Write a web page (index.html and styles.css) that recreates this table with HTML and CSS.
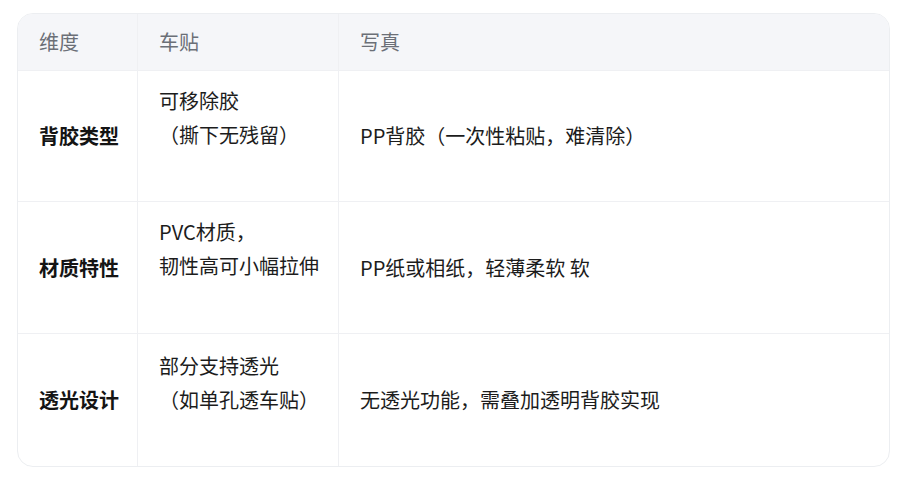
FILE: index.html
```html
<!DOCTYPE html>
<html lang="zh-CN">
<head>
<meta charset="utf-8">
<title>车贴与写真对比</title>
<link rel="stylesheet" href="styles.css">
</head>
<body>
<div class="card">
  <table class="compare">
    <colgroup>
      <col class="c1">
      <col class="c2">
      <col class="c3">
    </colgroup>
    <thead>
      <tr>
        <th>维度</th>
        <th>车贴</th>
        <th>写真</th>
      </tr>
    </thead>
    <tbody>
      <tr>
        <td class="dim">背胶类型</td>
        <td class="multi"><div>可移除胶</div><div>（撕下无残留）</div></td>
        <td>PP背胶（一次性粘贴，难清除）</td>
      </tr>
      <tr>
        <td class="dim">材质特性</td>
        <td class="multi"><div>PVC材质，</div><div>韧性高可小幅拉伸</div></td>
        <td>PP纸或相纸，轻薄柔软 软</td>
      </tr>
      <tr>
        <td class="dim">透光设计</td>
        <td class="multi"><div>部分支持透光</div><div>（如单孔透车贴）</div></td>
        <td>无透光功能，需叠加透明背胶实现</td>
      </tr>
    </tbody>
  </table>
</div>
</body>
</html>
```
FILE: styles.css
```css
html, body {
  margin: 0;
  padding: 0;
  background: #ffffff;
}
body {
  padding: 13px 17px 0 17px;
  font-family: "Noto Sans CJK SC", "Noto Sans", sans-serif;
  font-size: 20px;
  color: #1c1c1c;
}
.card {
  border: 1px solid #eceef1;
  border-radius: 16px;
  overflow: hidden;
  width: 871px;
}
.compare {
  width: 100%;
  border-collapse: separate;
  border-spacing: 0;
  table-layout: fixed;
}
.c1 { width: 120px; }
.c2 { width: 201px; }
.compare th,
.compare td {
  padding: 0 0 0 21px;
  line-height: 34px;
  text-align: left;
  white-space: nowrap;
  border-right: 1px solid #eff0f3;
  border-bottom: 1px solid #eff0f3;
}
.compare th:last-child,
.compare td:last-child {
  border-right: none;
}
.compare tbody tr:last-child td {
  border-bottom: none;
}
.compare th {
  background: #f5f6f9;
  color: #6b6f77;
  font-weight: 400;
  height: 57px;
  box-sizing: border-box;
}
.compare td {
  height: 132px;
  box-sizing: border-box;
  vertical-align: middle;
}
.compare tbody tr:first-child td {
  height: 131px;
}
.compare td.dim {
  font-weight: 700;
  color: #141414;
}
.compare td.multi {
  vertical-align: top;
  padding-top: 13px;
}
.compare tbody tr:last-child td.multi {
  padding-top: 15px;
}
```
